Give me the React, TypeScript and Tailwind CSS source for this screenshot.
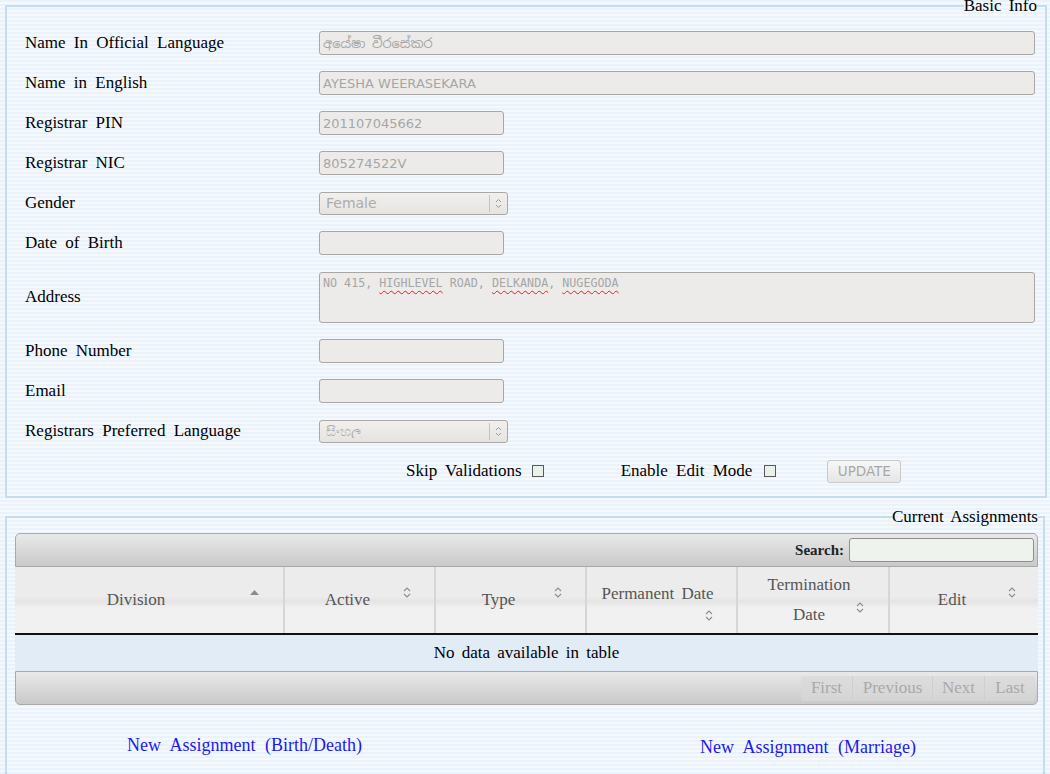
import React from "react";

const serif = "font-['Liberation_Serif','Times_New_Roman',serif]";

const SortBoth = () => (
  <svg width="8" height="11" viewBox="0 0 8 11" fill="none" stroke="#8c8c8c" strokeWidth="1.1">
    <path d="M1 4 L4 1 L7 4" />
    <path d="M1 7 L4 10 L7 7" />
  </svg>
);

const SortAsc = () => (
  <svg width="9" height="5" viewBox="0 0 9 5">
    <path d="M0 5 L4.5 0 L9 5Z" fill="#8c8c8c" />
  </svg>
);

const TextBox = ({ value, wide, sinhala }: { value?: string; wide?: boolean; sinhala?: boolean }) => (
  <div
    className={`h-[24px] ${wide ? "w-[716px]" : "w-[185px]"} rounded-[3px] border border-[#a9a6a3] bg-[#edebe9] px-[3px] flex items-center ${
      sinhala ? "font-['Noto_Sans_Sinhala','Noto_Sans','DejaVu_Sans',sans-serif]" : "font-['DejaVu_Sans','Noto_Sans',sans-serif]"
    } text-[13px] text-[#a6a6a6] leading-none overflow-hidden whitespace-nowrap [word-spacing:0px]`}
  >
    {value}
  </div>
);

const SelectBox = ({ value }: { value: string }) => (
  <div className="h-[23px] w-[189px] rounded-[3px] border border-[#aaa7a4] bg-[linear-gradient(to_bottom,#f1f0ee,#e6e4e1)] flex items-center font-['DejaVu_Sans','Noto_Sans',sans-serif] text-[14px] text-[#acacac] leading-none [word-spacing:0px]">
    <span className="flex-1 pl-[6px] whitespace-nowrap overflow-hidden">{value}</span>
    <span className="h-[17px] w-px bg-[#c4c2bf]" />
    <span className="w-[17px] flex justify-center">
      <svg width="7" height="11" viewBox="0 0 7 11" fill="none" stroke="#9a9a9a" strokeWidth="1">
        <path d="M1 4 L3.5 1.5 L6 4" />
        <path d="M1 7 L3.5 9.5 L6 7" />
      </svg>
    </span>
  </div>
);

const Checkbox = () => (
  <span className="inline-block h-[12px] w-[12px] border border-[#5a5a5a] bg-[#e8f1ea] align-middle" />
);

const Row = ({ label, children, h = "h-[40px]" }: { label: string; children: React.ReactNode; h?: string }) => (
  <div className={`flex items-center ${h}`}>
    <div className="w-[294px] shrink-0">{label}</div>
    {children}
  </div>
);

export default function App() {
  return (
    <div
      className={`w-[1050px] h-[774px] overflow-hidden bg-[repeating-linear-gradient(to_bottom,#eaf3fb_0px,#eaf3fb_2px,#f5f9fd_2px,#f5f9fd_4px)] ${serif} text-[17px] text-black [word-spacing:4px]`}
    >
      <div className="-mt-[3px] px-[5px]">
        <fieldset className="border-2 border-[#c6dcef] pl-[18px] pr-[10px] pb-[5px]">
          <legend className="ml-auto -mr-[2px] px-0 leading-[18px] text-[17px] [word-spacing:3px]">Basic Info</legend>
          <div className="pt-[8px]">
            <Row label="Name In Official Language">
              <TextBox wide sinhala value="අයේෂා වීරසේකර" />
            </Row>
            <Row label="Name in English">
              <TextBox wide value="AYESHA WEERASEKARA" />
            </Row>
            <Row label="Registrar PIN">
              <TextBox value="201107045662" />
            </Row>
            <Row label="Registrar NIC">
              <TextBox value="805274522V" />
            </Row>
            <Row label="Gender">
              <SelectBox value="Female" />
            </Row>
            <Row label="Date of Birth">
              <TextBox />
            </Row>
            <Row label="Address" h="h-[68px]">
              <div className="h-[51px] w-[716px] rounded-[3px] border border-[#a9a6a3] bg-[#edebe9] px-[3px] pt-[3px] font-['DejaVu_Sans_Mono','Liberation_Mono',monospace] text-[11.7px] leading-[14px] text-[#a6a6a6] [word-spacing:0px] whitespace-pre">
                {"NO 415, "}
                <span className="underline decoration-wavy decoration-[#e02020] decoration-1 underline-offset-[3px]">HIGHLEVEL</span>
                {" ROAD, "}
                <span className="underline decoration-wavy decoration-[#e02020] decoration-1 underline-offset-[3px]">DELKANDA</span>
                {", "}
                <span className="underline decoration-wavy decoration-[#e02020] decoration-1 underline-offset-[3px]">NUGEGODA</span>
              </div>
            </Row>
            <Row label="Phone Number">
              <TextBox />
            </Row>
            <Row label="Email">
              <TextBox />
            </Row>
            <Row label="Registrars Preferred Language">
              <SelectBox value="සිංහල" />
            </Row>
            <div className="h-[40px] flex items-center pl-[381px]">
              <span>Skip Validations</span>
              <span className="ml-[10px] flex"><Checkbox /></span>
              <span className="ml-[77px]">Enable Edit Mode</span>
              <span className="ml-[12px] flex"><Checkbox /></span>
              <span className="ml-[51px] h-[23px] w-[74px] rounded-[3px] border border-[#c9c9c9] bg-[linear-gradient(to_bottom,#f7f7f7,#e6e6e6)] flex items-center justify-center font-['DejaVu_Sans','Noto_Sans',sans-serif] text-[13.5px] text-[#a8a8a8] [word-spacing:0px]">
                UPDATE
              </span>
            </div>
          </div>
        </fieldset>

        <fieldset className="mt-[10px] border-2 border-[#c6dcef] pl-[8px] pr-[5px] pb-[40px]">
          <legend className="ml-auto mr-0 px-0 leading-[18px] text-[17px] [word-spacing:3px]">Current Assignments</legend>
          <div className="pt-[7px]">
            <div className="h-[34px] rounded-t-[5px] border border-[#a9a9a9] bg-[linear-gradient(to_bottom,#e9e9e9,#c9c9c9)] flex items-center justify-end pr-[3px]">
              <span className="font-bold text-[15px] mr-[5px] text-[#222] [word-spacing:0px]">Search:</span>
              <span className="h-[24px] w-[185px] rounded-[3px] border border-[#8f8f8f] bg-[#eef3ee]" />
            </div>
            <div className="flex h-[68px] border-b-2 border-[#111] bg-[linear-gradient(to_bottom,#ececec_0%,#ececec_45%,#e4e4e4_52%,#f1f1f1_62%,#f1f1f1_100%)] text-[17px] text-[#555] [word-spacing:3px]">
              <div className="relative w-[268px] flex items-center justify-center pr-[26px]">
                Division
                <span className="absolute right-[24px] top-[23px]"><SortAsc /></span>
              </div>
              <div className="relative w-[151px] border-l-2 border-[#d6d6d6] flex items-center justify-center pr-[24px]">
                Active
                <span className="absolute right-[23px] top-[20px]"><SortBoth /></span>
              </div>
              <div className="relative w-[151px] border-l-2 border-[#d6d6d6] flex items-center justify-center pr-[24px]">
                Type
                <span className="absolute right-[23px] top-[20px]"><SortBoth /></span>
              </div>
              <div className="relative w-[151px] border-l-2 border-[#d6d6d6] flex items-start justify-center pt-[14px] pr-[8px] whitespace-nowrap">
                Permanent Date
                <span className="absolute right-[23px] top-[43px]"><SortBoth /></span>
              </div>
              <div className="relative w-[152px] border-l-2 border-[#d6d6d6] flex flex-col items-center justify-center leading-[30px] pr-[8px]">
                <span>Termination</span>
                <span>Date</span>
                <span className="absolute right-[24px] top-[35px]"><SortBoth /></span>
              </div>
              <div className="relative flex-1 border-l-2 border-[#d6d6d6] flex items-center justify-center pr-[24px]">
                Edit
                <span className="absolute right-[22px] top-[20px]"><SortBoth /></span>
              </div>
            </div>
            <div className="h-[36px] bg-[#e1ecf6] flex items-center justify-center text-[17px] [word-spacing:3px]">
              No data available in table
            </div>
            <div className="h-[34px] rounded-b-[5px] border border-[#a9a9a9] bg-[linear-gradient(to_bottom,#e9e9e9,#c9c9c9)] flex items-center justify-end pr-[2px] text-[17px] text-[#a9a9a9] [word-spacing:0px]">
              <div className="flex h-[25px] rounded-[3px] bg-[#d9d9d9]/70">
                <span className="w-[52px] flex items-center justify-center border-r border-[#cfcfcf]">First</span>
                <span className="w-[80px] flex items-center justify-center border-r border-[#cfcfcf]">Previous</span>
                <span className="w-[52px] flex items-center justify-center border-r border-[#cfcfcf]">Next</span>
                <span className="w-[50px] flex items-center justify-center">Last</span>
              </div>
            </div>
            <div className="flex items-start mt-[27px] text-[18px] text-[#1a1aee] [word-spacing:5px]">
              <span className="ml-[112px]">New Assignment (Birth/Death)</span>
              <span className="ml-[338px] mt-[2px]">New Assignment (Marriage)</span>
            </div>
          </div>
        </fieldset>
      </div>
    </div>
  );
}
